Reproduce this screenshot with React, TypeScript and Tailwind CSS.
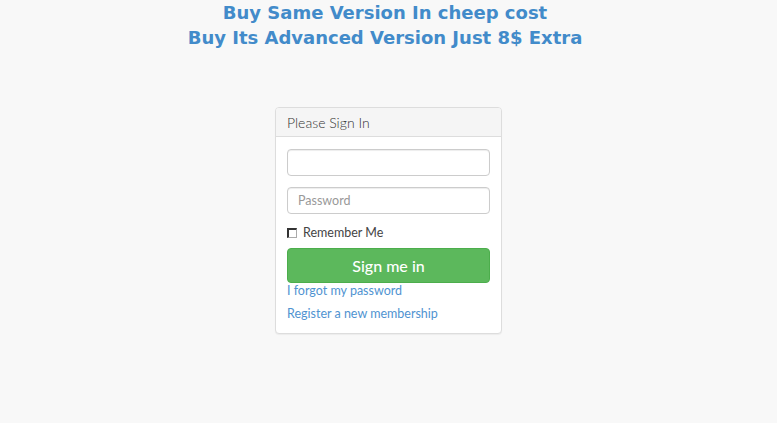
import React from "react";

const App = () => {
  return (
    <div
      className="w-[777px] h-[423px] bg-[#f8f8f8] overflow-hidden"
      style={{ fontFamily: 'Lato, "Noto Sans", sans-serif' }}
    >
      <div
        className="text-center font-bold text-[#428bca] text-[18px] leading-[25px] pr-[7px]"
        style={{ fontFamily: '"DejaVu Sans", sans-serif' }}
      >
        <div>Buy Same Version In cheep cost</div>
        <div>Buy Its Advanced Version Just 8$ Extra</div>
      </div>

      <div className="flex justify-center mt-[57px]">
        <div className="w-[227px] h-[227px] bg-white border border-[#dddddd] rounded-[4px] shadow-[0_1px_1px_rgba(0,0,0,0.05)]">
          <div className="h-[29px] px-[11px] flex items-center bg-[#f5f5f5] border-b border-[#dddddd] rounded-t-[3px] text-[14px] text-[#333] font-light">
            Please Sign In
          </div>
          <div className="px-[11px] pt-[12px]">
            <input
              type="text"
              className="block w-[203px] h-[27px] border border-[#cccccc] rounded-[4px] bg-white px-[10px] shadow-[inset_0_1px_1px_rgba(0,0,0,0.075)] outline-none"
            />
            <input
              type="password"
              placeholder="Password"
              className="block w-[203px] h-[27px] mt-[11px] border border-[#cccccc] rounded-[4px] bg-white px-[10px] text-[12.5px] placeholder:text-[#999] shadow-[inset_0_1px_1px_rgba(0,0,0,0.075)] outline-none"
            />
            <div className="flex items-center mt-[12px] h-[14px] text-[12.5px] text-[#444]">
              <span className="w-[10px] h-[10px] border-l-[2px] border-t-[2px] border-[#333] border-r border-b border-r-[#aaa] border-b-[#aaa] mr-[6px]"></span>
              Remember Me
            </div>
            <button className="block w-[203px] h-[35px] mt-[8px] bg-[#5cb85c] border border-[#4cae4c] rounded-[4px] text-white text-[16px] font-medium">
              Sign me in
            </button>
            <a className="block text-[12.5px] text-[#4f93d1] mt-[0px] leading-[16px]">
              I forgot my password
            </a>
            <a className="block text-[12.5px] text-[#4f93d1] mt-[7px] leading-[16px]">
              Register a new membership
            </a>
          </div>
        </div>
      </div>
    </div>
  );
};

export default App;
